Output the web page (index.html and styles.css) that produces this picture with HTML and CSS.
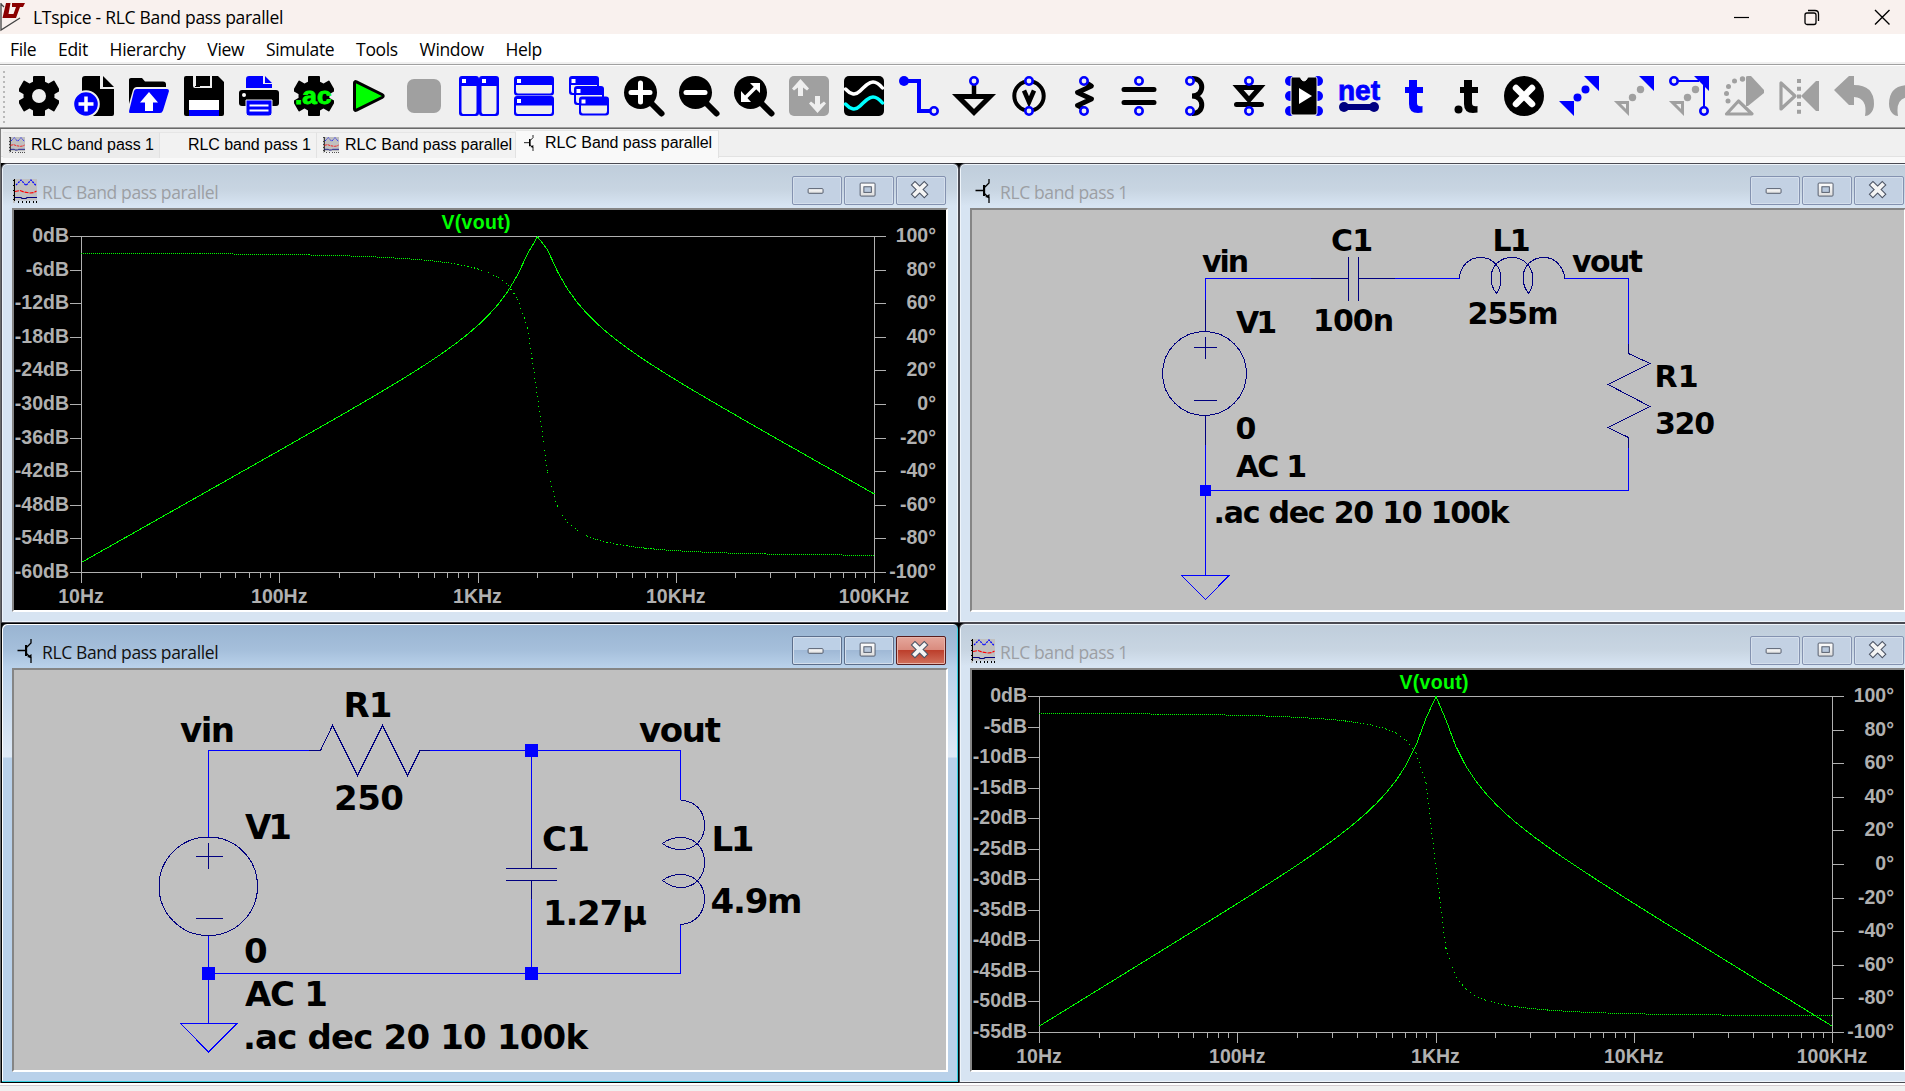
FILE: index.html
```html
<!DOCTYPE html>
<html lang="en">
<head>
<meta charset="utf-8">
<title>LTspice - RLC Band pass parallel</title>
<link rel="stylesheet" href="styles.css">
</head>
<body>
<svg class="defs" width="0" height="0" aria-hidden="true">
  <defs>
    <linearGradient id="metal" x1="0" y1="0" x2="0" y2="1"><stop offset="0" stop-color="#fff"/><stop offset="1" stop-color="#dcdcdc"/></linearGradient>
    <symbol id="i-plot" viewBox="0 0 24 24">
      <path d="M0 0h24v20H0z" fill="#c0c0c0"/>
      <path d="M1 0v24M1 20.500H24" stroke="#c0c0c0" stroke-width="2"/>
      <path d="M1.500 0v22M0 1h2M0 6h2M0 11h2M0 16h2M0 20h2M5.500 22v2M9.500 22v2M13.500 22v2M16.500 22v2M20.500 22v2M23.500 22v2" stroke="#000" fill="none" shape-rendering="crispEdges"/>
      <path d="M3 6L8 1L13 6.500L18 1L23 6.500" stroke="#00f" stroke-width="1.200" stroke-dasharray="2 1" fill="none"/>
      <path d="M2 12.500L7 11.500L11 13L17 14L21 13.500L23.500 12" stroke="#f00" stroke-width="1.200" stroke-dasharray="4 1" fill="none"/>
      <path d="M2 18.500H8L9 19.500H13L14 18.500H24" stroke="#000080" stroke-width="1.200" fill="none"/>
    </symbol>
    <symbol id="i-bjt" viewBox="0 0 15 24">
      <path d="M0 11.500H9M9 6.500V16.500M9 8.500L13.500 4V0M9 14.500L13.500 19V24" fill="none" stroke="#000" stroke-width="1.300"/>
      <path d="M8.500 6v11" stroke="#000" stroke-width="2"/><path d="M9.500 18l4.500 1v-4z" fill="#000"/>
    </symbol>
    <symbol id="b-min" viewBox="0 0 50 29"><rect x="15.500" y="12.500" width="16" height="5" rx="1" fill="url(#metal)" stroke="#4d5565"/></symbol>
    <symbol id="b-max" viewBox="0 0 50 29"><rect x="15.500" y="6.500" width="16" height="14" rx="1" fill="url(#metal)" stroke="#4d5565"/><rect x="19.500" y="10.500" width="8" height="6" fill="#b8c8dc" stroke="#4d5565"/></symbol>
    <symbol id="b-close" viewBox="0 0 50 29"><path d="M18.500 8.500L28.500 18.500M28.500 8.500L18.500 18.500" stroke="#4d5565" stroke-width="6.500" stroke-linecap="square"/><path d="M18.500 8.500L28.500 18.500M28.500 8.500L18.500 18.500" stroke="#f4f4f4" stroke-width="4.200" stroke-linecap="square"/></symbol>
    <symbol id="gear" viewBox="0 0 40 40"><circle cx="20" cy="20" r="15.500"/><rect x="14" width="12" height="40" rx="1"/><rect x="14" y="-1" width="12" height="42" rx="1" transform="rotate(60 20 20)"/><rect x="14" y="-1" width="12" height="42" rx="1" transform="rotate(120 20 20)"/></symbol>
  </defs>
</svg>

<div class="app">
  <header class="titlebar">
    <svg class="logo" viewBox="0 0 25 30" width="25" height="30"><path d="M1 1V28L20 16M1 2L4 5" fill="none" stroke="#444" stroke-width="1.300"/><path d="M6 1h4.500L8.500 12H14l-.5 4H2.500zM12 1h13l-2 4h-3l-4 11h-4l4-11h-4z" fill="#8b0000"/></svg>
    <span class="app-name">LTspice - RLC Band pass parallel</span>
    <div class="sys">
      <svg width="16" height="30"><path d="M0 15.500H15" stroke="#000" stroke-width="1.200"/></svg>
      <svg width="16" height="30"><rect x="1" y="11" width="11" height="11.500" rx="2" fill="none" stroke="#000" stroke-width="1.300"/><path d="M4 8.500H11q3.500 0 3.500 3.500v7" fill="none" stroke="#000" stroke-width="1.300"/></svg>
      <svg width="17" height="30"><path d="M1 8L15.500 22.500M15.500 8L1 22.500" stroke="#000" stroke-width="1.400"/></svg>
    </div>
  </header>
  <nav class="menu"><span>File</span><span>Edit</span><span>Hierarchy</span><span>View</span><span>Simulate</span><span>Tools</span><span>Window</span><span>Help</span></nav>

  <div class="toolbar">
    <i class="grip"></i>
    <svg viewBox="0 0 40 40"><use href="#gear"/><circle cx="20" cy="20" r="7" fill="#efefef"/></svg>
    <svg viewBox="0 0 40 40"><path d="M11 0H26V13H40V38q0 2-2 2H16L8 16V3q0-3 3-3z"/><path d="M29 0L40 11H29z"/><circle cx="12" cy="28" r="12.800" fill="#00f" stroke="#efefef" stroke-width="2"/><path d="M4.500 28h15M12 20.500v15" stroke="#fff" stroke-width="3.500"/></svg>
    <svg viewBox="0 0 40 40"><path d="M0 3.500q0-1.500 2-1.500H13l3 3.500H34q3 0 3 3V11H8q-3 0-4 3L0 28z"/><path d="M7.500 13H38q2 0 2 2L34 34.500q-1 2.500-3 2.500H1q-1.500 0-.8-2.500L5 15q.6-2 2.500-2z" fill="#00f"/><path d="M20 16l9 10.500h-5V35h-8v-8.500h-5z" fill="#fff"/></svg>
    <svg viewBox="0 0 40 40"><path d="M2 0H34l6 6V38q0 2-2 2H2q-2 0-2-2V2q0-2 2-2z"/><path d="M9 0v10q0 2 2 2H28V0h-2v10H11V0zM11 0h5v11h-5z" fill="#efefef"/><path d="M12 0h4v10h-4z"/><path d="M5 24h30v10H5z" fill="#fff"/><path d="M5 34h30v6H5z" fill="#00f"/></svg>
    <svg viewBox="0 0 40 40"><path d="M10 0H24V8h9V12H7V3q0-3 3-3zM26 0l7 7h-7z" fill="#00f"/><rect y="14" width="40" height="16" rx="3"/><circle cx="5" cy="19" r="2" fill="#fff"/><path d="M7 24H33V37q0 3-3 3H10q-3 0-3-3z" fill="#00f" stroke="#efefef" stroke-width="1"/><path d="M10.500 29.500h19M10.500 34.500h19" stroke="#fff" stroke-width="1.800"/></svg>
    <svg viewBox="0 0 40 40"><use href="#gear"/><text class="ico-ac" x="1" y="27.500" textLength="36.500" lengthAdjust="spacingAndGlyphs">.ac</text></svg>
    <svg viewBox="0 0 40 40"><path d="M5.500 7v26q0 2 2 1.200L33 21.500q2.500-1.500 0-3L7.500 5.800q-2-.8-2 1.200z" fill="#0f0" stroke="#000" stroke-width="3"/></svg>
    <svg viewBox="0 0 40 40"><rect x="3" y="3" width="34" height="34" rx="7" fill="#a0a0a0"/></svg>
    <svg viewBox="0 0 40 40"><rect width="20" height="40" rx="3" fill="#00f"/><rect x="20" width="20" height="40" rx="3" fill="#00f"/><path d="M2.500 10h15v25q0 3-2 3h-11q-2 0-2-3zM22.500 10h15v25q0 3-2 3h-11q-2 0-2-3z" fill="#efefef"/><path d="M3 3h4v4H3zM23 3h4v4h-4z" fill="#fff"/></svg>
    <svg viewBox="0 0 40 40"><rect width="40" height="19.500" rx="3" fill="#00f"/><rect y="20" width="40" height="20" rx="3" fill="#00f"/><path d="M2 9h36v6q0 2.500-2 2.500H4q-2 0-2-2.500zM2 29.500h36v6q0 2.500-2 2.500H4q-2 0-2-2.500z" fill="#efefef"/><path d="M3 3h4v4H3zM3 23h4v4H3z" fill="#fff"/></svg>
    <svg viewBox="0 0 40 40"><g id="casc"><rect width="30" height="19" rx="3" fill="#00f"/><path d="M2 9h26v5q0 3-2 3H4q-2 0-2-3z" fill="#efefef"/><path d="M2.500 3h4v4h-4z" fill="#fff"/></g><use href="#casc" x="5" y="10"/><use href="#casc" x="10" y="20.500"/></svg>
    <svg viewBox="0 0 40 40"><circle cx="16.500" cy="16.500" r="16.500"/><path d="M26 26L37.500 37.500" stroke="#000" stroke-width="6" stroke-linecap="round"/><path d="M7 16.500h19M16.500 7v19" stroke="#fff" stroke-width="5" stroke-linecap="round"/></svg>
    <svg viewBox="0 0 40 40"><circle cx="16.500" cy="16.500" r="16.500"/><path d="M26 26L37.500 37.500" stroke="#000" stroke-width="6" stroke-linecap="round"/><path d="M7 16.500h19" stroke="#fff" stroke-width="5" stroke-linecap="round"/></svg>
    <svg viewBox="0 0 40 40"><circle cx="16.500" cy="16.500" r="16.500"/><path d="M26 26L37.500 37.500" stroke="#000" stroke-width="6" stroke-linecap="round"/><path d="M11 22L22 11" stroke="#fff" stroke-width="3.500"/><path d="M16 7h10v10zM7 15v11h10z" fill="#fff"/></svg>
    <svg viewBox="0 0 40 40"><rect width="40" height="40" rx="5" fill="#a0a0a0"/><path d="M11.500 3l8.500 9.500-2 2-4-3V20H9V11.500l-4 3-2-2zM28.500 37l-8.500-9.500 2-2 4 3V20h5v8.500l4-3 2 2z" fill="#efefef"/></svg>
    <svg viewBox="0 0 40 40"><rect width="40" height="40" rx="5"/><path d="M1.500 13C6 18 11 20 16 15S25 6 29 6S36 9 38.500 12" fill="none" stroke="#fff" stroke-width="3.500" stroke-linecap="round"/><path d="M1.500 28C6 33 11 35 16 30S25 21 29 21S36 24 38.500 27" fill="none" stroke="#0ff" stroke-width="3.500" stroke-linecap="round"/></svg>
    <svg viewBox="0 0 40 40"><path d="M5 5H20V35H32" fill="none" stroke="#00f" stroke-width="4"/><circle cx="5" cy="5" r="5" fill="#00f"/><circle cx="35" cy="35" r="3.700" fill="#efefef" stroke="#00f" stroke-width="2.600"/></svg>
    <svg viewBox="0 0 40 40"><path d="M20 9v10" stroke="#000" stroke-width="4.500"/><path d="M4 20.500H36L20 36.500z" fill="none" stroke="#000" stroke-width="5"/><circle cx="20" cy="5" r="3.700" fill="#efefef" stroke="#00f" stroke-width="2.600"/></svg>
    <svg viewBox="0 0 40 40"><circle cx="20" cy="20" r="14.700" fill="none" stroke="#000" stroke-width="4"/><path d="M15 14.500L20 26L25 14.500" fill="none" stroke="#000" stroke-width="4.500"/><g fill="#efefef" stroke="#00f" stroke-width="2.600"><circle cx="20" cy="5" r="3.700"/><circle cx="20" cy="35" r="3.700"/></g></svg>
    <svg viewBox="0 0 40 40"><path d="M22 6.500L27.500 10L13.500 16.500L27.500 23L13.500 29.500L20 33" fill="none" stroke="#000" stroke-width="4.800" stroke-linejoin="round"/><g fill="#efefef" stroke="#00f" stroke-width="2.600"><circle cx="20" cy="5" r="3.700"/><circle cx="20" cy="35" r="3.700"/></g></svg>
    <svg viewBox="0 0 40 40"><path d="M5 13.500H35M5 26.500H35" stroke="#000" stroke-width="5" stroke-linecap="round"/><g fill="#efefef" stroke="#00f" stroke-width="2.600"><circle cx="20" cy="5" r="3.700"/><circle cx="20" cy="35" r="3.700"/></g></svg>
    <svg viewBox="0 0 40 40"><path d="M18 2.500C31 2 31 20 18 20C31 20 31 38 18 37.500" fill="none" stroke="#000" stroke-width="5"/><g fill="#efefef" stroke="#00f" stroke-width="2.600"><circle cx="16" cy="5" r="3.700"/><circle cx="16" cy="35" r="3.700"/></g></svg>
    <svg viewBox="0 0 40 40"><path d="M9 11.500H31L20 24z" fill="none" stroke="#000" stroke-width="5"/><path d="M7.500 28.500H32.500" stroke="#000" stroke-width="5" stroke-linecap="round"/><g fill="#efefef" stroke="#00f" stroke-width="2.600"><circle cx="20" cy="5" r="3.700"/><circle cx="20" cy="35" r="3.700"/></g></svg>
    <svg viewBox="0 0 40 40"><g fill="#00f"><circle cx="6" cy="5" r="5"/><circle cx="6" cy="20" r="5"/><circle cx="6" cy="35" r="5"/><circle cx="34" cy="5" r="5"/><circle cx="34" cy="20" r="5"/><circle cx="34" cy="35" r="5"/></g><path d="M8.500 1H16q4 8 8 0h7.500q1.500 0 1.500 2V37q0 2-2 2H9q-2 0-2-2V3q0-2 1.500-2z" stroke="#efefef" stroke-width="1"/><path d="M15 12L28 20L15 28z" fill="#fff"/></svg>
    <svg viewBox="0 0 40 40"><text class="ico-net" x="-1" y="23.500" textLength="42" lengthAdjust="spacingAndGlyphs">net</text><g fill="#000080"><path d="M5 28h30v6H5z"/><circle cx="5" cy="31" r="5"/><circle cx="35" cy="31" r="5"/></g></svg>
    <svg viewBox="0 0 40 40"><path d="M15 4h8v7h6v6h-6v10q0 4 5.500 3v6.500Q15 39 15 28V17h-4v-6h4z" fill="#00f"/></svg>
    <svg viewBox="0 0 40 40"><path d="M15 4h8v7h6v6h-6v10q0 4 5.500 3v6.500Q15 39 15 28V17h-4v-6h4z"/><circle cx="9.500" cy="33.500" r="4"/></svg>
    <svg viewBox="0 0 40 40"><circle cx="20" cy="20" r="20"/><path d="M12 12L28 28M28 12L12 28" stroke="#fff" stroke-width="6.500" stroke-linecap="round"/></svg>
    <svg viewBox="0 0 40 40"><g fill="#00f"><path d="M25 0H40V15zM0 25H15V40z"/><circle cx="18.500" cy="21.500" r="4"/><circle cx="26.500" cy="13.500" r="4"/></g></svg>
    <svg viewBox="0 0 40 40"><path d="M25 0H40V15z" fill="#00f"/><path d="M3.500 26.500H13.500V36.500z" fill="none" stroke="#a0a0a0" stroke-width="3"/><g fill="#a0a0a0"><circle cx="18.500" cy="21.500" r="3.700"/><circle cx="26.500" cy="13.500" r="3.700"/></g></svg>
    <svg viewBox="0 0 40 40"><path d="M25 0H40V15z" fill="#00f"/><path d="M9 5H30M35 8V31" stroke="#00f" stroke-width="2"/><path d="M3.500 26.500H13.500V36.500z" fill="none" stroke="#a0a0a0" stroke-width="3"/><g fill="#a0a0a0"><circle cx="18.500" cy="21.500" r="3.700"/><circle cx="26.500" cy="13.500" r="3.700"/></g><g fill="#efefef" stroke="#00f" stroke-width="2.600"><circle cx="5" cy="5" r="3.700"/><circle cx="35" cy="35" r="3.700"/></g></svg>
    <svg viewBox="0 0 40 40"><g fill="#a0a0a0"><path d="M22 1q0-1 2-1h3L40 14v3L24 30h-2z"/><circle cx="18.500" cy="3" r="2.700"/><circle cx="10.500" cy="5" r="2.500"/><circle cx="4.500" cy="10.500" r="2.500"/><circle cx="2.500" cy="17.500" r="2.500"/><circle cx="4" cy="25" r="2.500"/></g><path d="M2.500 38L14.500 25L28 38z" fill="#efefef" stroke="#a0a0a0" stroke-width="3.200" stroke-linejoin="round"/></svg>
    <svg viewBox="0 0 40 40"><path d="M2 7V33L16 20z" fill="none" stroke="#a0a0a0" stroke-width="3.200" stroke-linejoin="round"/><path d="M22 20L37 5h3V35h-3z" fill="#a0a0a0"/><path d="M20 3V40" stroke="#a0a0a0" stroke-width="4" stroke-dasharray="4 3.700"/></svg>
    <svg viewBox="0 0 40 40"><path d="M0 14L15 0h5V9Q40 9 40 28Q40 34 36 38q-2 2-5 2Q34 22 20 21v8h-5z" fill="#a0a0a0"/></svg>
    <svg viewBox="0 0 40 40"><path d="M40 14L25 0h-5V9Q0 9 0 28Q0 34 4 38q2 2 5 2Q6 22 20 21v8h5z" fill="#a0a0a0"/></svg>
  </div>

  <div class="tabs">
    <div class="tab t1"><svg width="16" height="16"><use href="#i-plot"/></svg>RLC band pass 1</div>
    <div class="tab t2">RLC band pass 1</div>
    <div class="tab t3"><svg width="16" height="16"><use href="#i-plot"/></svg>RLC Band pass parallel</div>
    <div class="tab t4 on"><svg width="12" height="16"><use href="#i-bjt"/></svg>RLC Band pass parallel</div>
  </div>

  <main class="desktop">
    <section class="win w1">
      <div class="cap"><svg class="wi" width="24" height="24"><use href="#i-plot"/></svg><span class="wide">RLC Band pass parallel</span>
        <div class="btns"><svg><use href="#b-min"/></svg><svg><use href="#b-max"/></svg><svg><use href="#b-close"/></svg></div></div>
      <div class="client"><svg class="plot" width="932" height="400" data-step="6" data-count="10" data-kind="parallel" data-r="250" data-l="0.0049" data-c="0.00000127"></svg></div>
    </section>

    <section class="win w2">
      <div class="cap"><svg class="wi" width="24" height="24"><use href="#i-bjt"/></svg><span>RLC band pass 1</span>
        <div class="btns"><svg><use href="#b-min"/></svg><svg><use href="#b-max"/></svg><svg><use href="#b-close"/></svg></div></div>
      <div class="client"><svg class="sch s30" width="932" height="400" viewBox="972 210 932 400">
        <g class="wire"><path d="M1205.500 331.500V278.500H1311M1395 278.500H1460M1565 278.500H1628.500V344M1628.500 448V490.500H1205.500M1205.500 415.500V575.500M1181.500 575.500H1229L1205.500 599.500z"/></g>
        <g class="part"><path d="M1205.500 300V331M1205.500 416V445M1311 278.500H1348.500M1358.500 278.500H1395M1348.500 257V301M1358.500 257V301M1628.500 344V353.500L1650 363.500L1608 384.500L1650 406.500L1608 427.500L1628.500 437.500V448M1194 347.500H1216.500M1205.500 337V359M1194 400.500H1216.500"/>
        <circle cx="1204.500" cy="373.500" r="42"/>
        <path d="M1459.500 278.500C1460 266 1469 257.500 1480.500 257.500C1493 257.500 1501 267 1501 279C1501 285 1499 290 1496.500 293.500C1493 289 1491 284 1491 278C1491 266 1500 257.500 1512 257.500C1524 257.500 1533 267 1533 279C1533 285 1531 290 1528.500 293.500C1525 289 1523 284 1523 278C1523 266 1532 257.500 1544 257.500C1556 257.500 1563 267 1565 278.500"/></g>
        <rect class="node" x="1200" y="485" width="11" height="11"/>
        <text x="1202" y="271.500" textLength="47">vin</text><text x="1331" y="250.500" textLength="42">C1</text><text x="1492.500" y="250.500" textLength="38">L1</text><text x="1572" y="271.500" textLength="71">vout</text>
        <text x="1236" y="333" textLength="41">V1</text><text x="1313" y="330.500" textLength="81">100n</text><text x="1467.500" y="323.500" textLength="91">255m</text><text x="1654.500" y="386.500" textLength="44">R1</text><text x="1655" y="433.500" textLength="60">320</text>
        <text x="1235.500" y="439" textLength="20.500">0</text><text x="1236" y="476.500" textLength="71">AC 1</text><text x="1213.500" y="523" textLength="296">.ac dec 20 10 100k</text>
      </svg></div>
    </section>

    <section class="win w3 active">
      <div class="cap"><svg class="wi" width="24" height="24"><use href="#i-bjt"/></svg><span class="wide">RLC Band pass parallel</span>
        <div class="btns"><svg><use href="#b-min"/></svg><svg><use href="#b-max"/></svg><svg class="x"><use href="#b-close"/></svg></div></div>
      <div class="client"><svg class="sch s35" width="932" height="400" viewBox="14 670 932 400">
        <g class="wire"><path d="M208.500 837V750.500H309M430 750.500H680.500V800M531.500 750.500V850M531.500 899V973.500M208.500 935V1023.500M208.500 973.500H680.500V924M180.500 1023.500H237L208.500 1052z"/></g>
        <g class="part"><path d="M309 750.500H320.500L332.500 725.500L357.500 775.500L382.500 725.500L407.500 775.500L420 750.500H430M531.500 850V868.500M531.500 880.500V899M506 868.500H556.500M506 880.500H556.500M196 856.500H222.500M208.500 843V869M196 918.500H222.500"/>
        <circle cx="208.300" cy="886.300" r="49.300"/>
        <path d="M680.500 800.500C695 800.500 704.500 811 704.500 825C704.500 840 695 849.500 680.500 849.500C673 849.500 667 847 662.500 843.500C667 840 673 837.500 680.500 837.500C695 837.500 704.500 848 704.500 862C704.500 877 695 887.500 680.500 887.500C673 887.500 667 884 662.500 880.500C667 877 673 874.500 680.500 874.500C695 874.500 704.500 885 704.500 899C704.500 913 695 924 680.500 924.500"/></g>
        <g class="node"><rect x="525" y="744" width="13" height="13"/><rect x="525" y="967" width="13" height="13"/><rect x="202" y="967" width="13" height="13"/></g>
        <text x="343.500" y="717" textLength="49">R1</text><text x="180" y="742" textLength="55">vin</text><text x="334" y="810" textLength="70">250</text><text x="639" y="742" textLength="82">vout</text><text x="245" y="839" textLength="47">V1</text><text x="542" y="851" textLength="48">C1</text><text x="543" y="925" textLength="104">1.27µ</text><text x="711.500" y="851" textLength="43">L1</text><text x="710.500" y="913" textLength="92">4.9m</text><text x="244" y="963" textLength="24">0</text><text x="245" y="1006" textLength="83">AC 1</text><text x="243" y="1049" textLength="345">.ac dec 20 10 100k</text>
      </svg></div>
    </section>

    <section class="win w4">
      <div class="cap"><svg class="wi" width="24" height="24"><use href="#i-plot"/></svg><span>RLC band pass 1</span>
        <div class="btns"><svg><use href="#b-min"/></svg><svg><use href="#b-max"/></svg><svg><use href="#b-close"/></svg></div></div>
      <div class="client"><svg class="plot" width="932" height="400" data-step="5" data-count="11" data-kind="series" data-r="320" data-l="0.255" data-c="0.0000001"></svg></div>
    </section>
  </main>
  <footer class="status"></footer>
</div>
<script src="plots.js"></script>
</body>
</html>
```
FILE: styles.css
```css
* { box-sizing: border-box; }
body { margin: 0; background: #f0f0f0; overflow: hidden; }
.defs { position: absolute; }
.app { width: 1905px; height: 1091px; display: flex; flex-direction: column; overflow: hidden; font-family: "Open Sans", "Noto Sans", sans-serif; font-size: 17.500px; color: #000; }

.titlebar { height: 34px; flex: none; background: #f9f1ee; display: flex; align-items: center; }
.app-name { margin-left: 8px; letter-spacing: -0.3px; }
.sys { margin-left: auto; display: flex; gap: 54px; padding-right: 14px; }
.sys svg { display: block; }

.menu { height: 28px; flex: none; background: #fff; display: flex; align-items: center; gap: 21.800px; padding: 3px 0 0 10px; letter-spacing: -0.35px; line-height: 25px; }

.toolbar { height: 67px; flex: none; background: #efefef; border-top: 2px solid #f0f0f0; border-bottom: 1px solid #696969; box-shadow: inset 0 1px #a0a0a0, inset 0 2px #fff, inset 0 -1px #a0a0a0; display: flex; gap: 15px; padding-top: 12px; overflow: hidden; }
.toolbar svg { width: 40px; height: 40px; flex: none; display: block; overflow: visible; }
.grip { width: 2px; height: 54px; flex: none; margin: -5px -1px 0 3px; background: repeating-linear-gradient(#b8b8b8 0 2px, transparent 2px 5px); }
.ico-ac { font: bold 23px "Liberation Sans", sans-serif; fill: #0f0; stroke: #0f0; stroke-width: .8px; }
.ico-net { font: bold 28px "Liberation Sans", sans-serif; fill: #00f; stroke: #00f; stroke-width: .8px; }

.tabs { height: 34px; flex: none; background: #f0f0f0; border-left: 1px solid #808080; display: flex; padding: 1px 0 0 2px; font: 16px "Liberation Sans", Arial, sans-serif; letter-spacing: -0.05px; box-shadow: inset 0 -6px #f9f9f9, inset 0 -7px #e2e2e2; }
.tab { height: 26px; margin-top: 2px; display: flex; align-items: center; border-right: 1px solid #e2e2e2; border-top: 1px solid #e6e6e6; white-space: nowrap; padding-bottom: 2px; }
.tab svg { margin-right: 6px; }
.t1 { width: 157px; padding-left: 6px; background: #ececec; }
.t2 { width: 157px; padding-left: 28px; background: #f2f2f2; }
.t3 { width: 199px; padding-left: 6px; background: #f2f2f2; }
.t4 { width: 203px; padding-left: 7px; height: 28px; margin-top: 0; background: #f9f9f9; padding-bottom: 4px; }
.t4 svg { margin-right: 10px; }

.desktop { position: relative; height: 920px; flex: none; background: #000; border-left: 1px solid #696969; overflow: hidden; }
.win { position: absolute; width: 958px; height: 460px; border: 1px solid #4a4a52; border-radius: 6px 6px 0 0; background: linear-gradient(#bfcddb, #c8d5e2 26px, #d7e4f2 42px, #d7e4f2); box-shadow: inset 0 0 0 1px #eef4fa; padding: 1px 10px 10px; display: flex; flex-direction: column; }
.w1 { left: 0; top: 0; }
.w2 { left: 958px; top: 0; }
.w3 { left: 0; top: 460px; }
.w4 { left: 958px; top: 460px; }
.win.active { background: linear-gradient(#99b4d1, #a5bfdb 26px, #b9d1ea 43px, #dfeaf6 133px, #b9d1ea 134px); border-color: #000; box-shadow: inset -1px -1px #35d0e0, inset 1px 1px #fff; }
.cap { height: 43px; flex: none; display: flex; align-items: center; color: #9c9fa4; padding-top: 9px; }
.active .cap { color: #111; }
.wi { margin: 0 5px 0 1px; }
.cap span { letter-spacing: -0.38px; padding-top: 1px; }
.btns { margin-left: auto; display: flex; gap: 2px; margin-top: -2px; padding-right: 2px; }
.btns svg { width: 50px; height: 29px; border: 1px solid #8492b0; border-radius: 2px; box-shadow: inset 0 0 0 1px #d5dfec; background: #c3d1e3; }
.active .btns svg { border-color: #5d6f8c; background: linear-gradient(#bdd0e6 50%, #a0b9d6 50%, #b4cbe4); }
.active .btns svg.x { border-color: #5a1d1d; background: linear-gradient(#e5a79c, #d98b7e 48%, #bd3f2c 50%, #d0705c); box-shadow: inset 0 0 0 1px #e8b4aa; }
.client { width: 936px; height: 404px; flex: none; border: 2px solid; border-color: #858585 #fff #fff #858585; }
.client svg { display: block; }

.plot { background: #000; font: bold 19.500px "Liberation Sans", Arial, sans-serif; }
.plot text { fill: #b0b0b0; }
.plot .name { fill: #0f0; }
.plot path { fill: none; stroke: #b0b0b0; shape-rendering: crispEdges; }
.plot .mag, .plot .ph { stroke: #0f0; }
.sch { background: #c0c0c0; font-family: "DejaVu Sans", sans-serif; font-weight: bold; }
.s30 { font-size: 30px; }
.s35 { font-size: 34px; }
.wire, .part { fill: none; shape-rendering: crispEdges; }
.wire { stroke: #0000ff; }
.part { stroke: #000080; }
.node { fill: #00f; }
.status { flex: 1; background: #f0f0f0; border-top: 2px solid #fff; box-shadow: inset 0 1px #d4ccd0; }
```
FILE: plots.js
```js
// Draws the AC sweep (20 points per decade, 10 Hz to 100 kHz) of each circuit.
const X0 = 67, X1 = 860, Y0 = 26, Y1 = 362, W = X1 - X0, H = Y1 - Y0;
const NS = 'http://www.w3.org/2000/svg';

function add(svg, tag, attrs, text) {
  const el = document.createElementNS(NS, tag);
  for (const k in attrs) el.setAttribute(k, attrs[k]);
  if (text !== undefined) el.textContent = text;
  svg.appendChild(el);
}

document.querySelectorAll('.plot').forEach(svg => {
  const d = svg.dataset, step = +d.step, n = +d.count, span = step * n;
  const R = +d.r, L = +d.l, C = +d.c;
  let axes = `M${X0 + .5} ${Y0 + .5}H${X1 + .5}V${Y1 + .5}H${X0 + .5}z`;

  for (let i = 0; i <= n; i++) {
    const y = Math.round(Y0 + H * i / n);
    axes += `M${X0 - 11} ${y + .5}H${X0}`;
    add(svg, 'text', { x: 55, y: y + 6, 'text-anchor': 'end' }, (i ? '-' + i * step : '0') + 'dB');
  }
  for (let i = 0; i <= 10; i++) {
    const y = Math.round(Y0 + H * i / 10);
    axes += `M${X1} ${y + .5}H${X1 + 12}`;
    add(svg, 'text', { x: 922, y: y + 6, 'text-anchor': 'end' }, (100 - 20 * i) + '°');
  }
  ['10Hz', '100Hz', '1KHz', '10KHz', '100KHz'].forEach((label, i) => {
    const x = X0 + W * i / 4;
    axes += `M${Math.round(x) + .5} ${Y1}v11`;
    add(svg, 'text', { x: x, y: 393, 'text-anchor': 'middle' }, label);
    if (i < 4) for (let k = 2; k < 10; k++) axes += `M${Math.round(x + W / 4 * Math.log10(k)) + .5} ${Y1}v6`;
  });
  add(svg, 'path', { d: axes });
  add(svg, 'text', { class: 'name', x: 462, y: 19, 'text-anchor': 'middle', textLength: 69 }, 'V(vout)');

  const mag = [], ph = [];
  for (let i = 0; i <= 80; i++) {
    const w = 2 * Math.PI * 10 * Math.pow(10, i / 20);
    const q = d.kind === 'parallel' ? R * (w * C - 1 / (w * L)) : (w * L - 1 / (w * C)) / R;
    const x = X0 + .5 + W * i / 80;
    mag.push([x, Y0 + .5 + H * 10 * Math.log10(1 + q * q) / span]);
    ph.push([x, Y0 + .5 + H * (100 + Math.atan(q) * 180 / Math.PI) / 200]);
  }
  add(svg, 'path', { class: 'mag', d: 'M' + mag.map(p => p.join(' ')).join('L') });

  // Dots thin out where the phase falls quickly.
  for (let i = 0; i < 80; i++) {
    const [a, b] = ph[i], [c, e] = ph[i + 1], slope = Math.abs((e - b) / (c - a));
    const dash = slope < .15 ? '1 1' : slope < .5 ? '1 2' : '1 4';
    add(svg, 'path', { class: 'ph', d: `M${a} ${b}L${c} ${e}`, 'stroke-dasharray': dash });
  }
});
```
